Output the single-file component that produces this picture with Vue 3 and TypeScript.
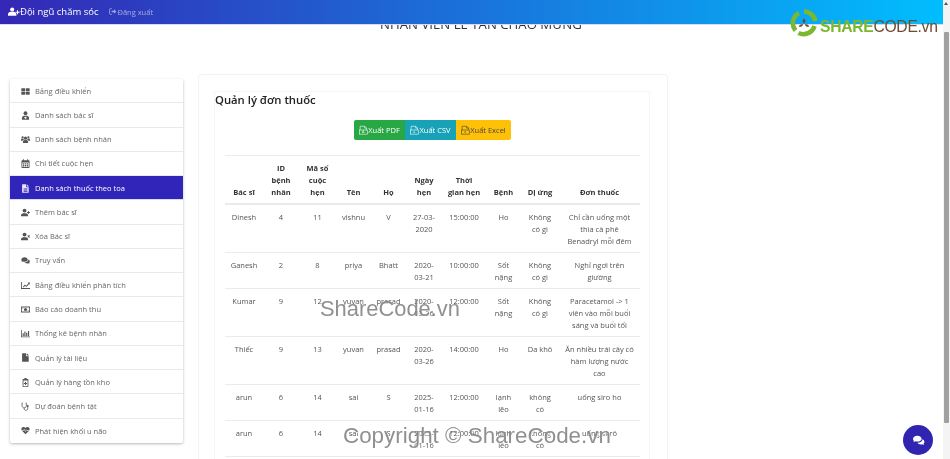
<script setup lang="ts">
interface MenuItem { label: string; icon: string; active?: boolean }
const menu: MenuItem[] = [
  { label: 'Bảng điều khiển', icon: 'grid' },
  { label: 'Danh sách bác sĩ', icon: 'doctor' },
  { label: 'Danh sách bệnh nhân', icon: 'users' },
  { label: 'Chi tiết cuộc hẹn', icon: 'calendar' },
  { label: 'Danh sách thuốc theo toa', icon: 'fileText', active: true },
  { label: 'Thêm bác sĩ', icon: 'userPlus' },
  { label: 'Xóa Bác sĩ', icon: 'userX' },
  { label: 'Truy vấn', icon: 'comments' },
  { label: 'Bảng điều khiển phân tích', icon: 'lineChart' },
  { label: 'Báo cáo doanh thu', icon: 'money' },
  { label: 'Thống kê bệnh nhân', icon: 'barChart' },
  { label: 'Quản lý tài liệu', icon: 'file' },
  { label: 'Quản lý hàng tồn kho', icon: 'clipboard' },
  { label: 'Dự đoán bệnh tật', icon: 'stethoscope' },
  { label: 'Phát hiện khối u não', icon: 'heartbeat' },
]
const headers = ['Bác sĩ', 'ID bệnh nhân', 'Mã số cuộc hẹn', 'Tên', 'Họ', 'Ngày hẹn', 'Thời gian hẹn', 'Bệnh', 'Dị ứng', 'Đơn thuốc']
const widths = [38, 36, 37, 35, 35, 36, 44, 35, 38, 81]
const rows: string[][] = [
  ['Dinesh', '4', '11', 'vishnu', 'V', '27-03-2020', '15:00:00', 'Ho', 'Không có gì', 'Chỉ cần uống một thìa cà phê Benadryl mỗi đêm'],
  ['Ganesh', '2', '8', 'priya', 'Bhatt', '2020-03-21', '10:00:00', 'Sốt nặng', 'Không có gì', 'Nghỉ ngơi trên giường'],
  ['Kumar', '9', '12', 'yuvan', 'prasad', '2020-03-26', '12:00:00', 'Sốt nặng', 'Không có gì', 'Paracetamol -> 1 viên vào mỗi buổi sáng và buổi tối'],
  ['Thiếc', '9', '13', 'yuvan', 'prasad', '2020-03-26', '14:00:00', 'Ho', 'Da khô', 'Ăn nhiều trái cây có hàm lượng nước cao'],
  ['arun', '6', '14', 'sai', 'S', '2025-01-16', '12:00:00', 'lạnh lẽo', 'không có', 'uống siro ho'],
  ['arun', '6', '14', 'sai', 'S', '2025-01-16', '12:00:00', 'lạnh lẽo', 'không có', 'uống si-rô'],
]
const exportsList = [
  { label: 'Xuất PDF', cls: 'green', mark: 'A' },
  { label: 'Xuất CSV', cls: 'teal', mark: 'a' },
  { label: 'Xuất Excel', cls: 'yellow', mark: 'x' },
]
</script>

<template>
  <div class="page">
    <header class="topbar">
      <span class="brand">
        <svg class="brand-icon" viewBox="0 0 20 14" fill="currentColor"><circle cx="7" cy="3.6" r="3.4"/><path d="M0 14v-2c0-2.800 2.200-4.500 4.500-4.500h5c2.300 0 4.500 1.700 4.500 4.500v2z"/><path d="M15 5h1.800v2.400H19.500v1.700H16.800v2.400H15V9.100H12.500V7.400H15z"/></svg>Đội ngũ chăm sóc
      </span>
      <a class="logout">
        <svg class="logout-icon" viewBox="0 0 14 12" fill="none" stroke="currentColor" stroke-width="1.400"><path d="M5 1H2.500C1.500 1 1 1.600 1 2.500v7C1 10.400 1.500 11 2.500 11H5"/><path d="M4.500 4.500h4V2l4.500 4-4.500 4V7.500h-4z" fill="currentColor" stroke="none"/></svg>Đăng xuất
      </a>
    </header>

    <h1 class="greeting">NHÂN VIÊN LỄ TÂN CHÀO MỪNG</h1>

    <main class="content">
      <nav class="menu">
        <a v-for="item in menu" :key="item.label" class="menu-item" :class="{ active: item.active }">
          <svg class="menu-icon" viewBox="0 0 14 14" fill="currentColor">
            <template v-if="item.icon === 'grid'"><rect x="0.500" y="2" width="6" height="4.500" rx=".6"/><rect x="7.500" y="2" width="6" height="4.500" rx=".6"/><rect x="0.500" y="7.500" width="6" height="4.500" rx=".6"/><rect x="7.500" y="7.500" width="6" height="4.500" rx=".6"/></template>
            <template v-else-if="item.icon === 'doctor'"><circle cx="7" cy="3.500" r="3"/><path d="M1.500 13.500v-2.500c0-2 1.500-3.500 3.500-3.500h4c2 0 3.500 1.500 3.500 3.500v2.500z"/><rect x="6" y="9" width="2" height="3" fill="#fff"/><rect x="5" y="10" width="4" height="1" fill="#fff"/></template>
            <template v-else-if="item.icon === 'users'"><circle cx="7" cy="5" r="2.500"/><circle cx="2.500" cy="3.500" r="1.700"/><circle cx="11.500" cy="3.500" r="1.700"/><path d="M3 12.500v-2c0-1.600 1.200-2.700 2.700-2.700h2.600c1.500 0 2.700 1.100 2.700 2.700v2z"/><path d="M0 9V7.500C0 6.200.9 5.600 2 5.600h1.500c.2.900.6 1.500 1.200 1.900C3.300 7.800 2.500 8.400 2.200 9zM14 9V7.500c0-1.300-.9-1.900-2-1.900h-1.500c-.2.900-.6 1.500-1.200 1.900 1.400.3 2.200.9 2.500 1.500z"/></template>
            <template v-else-if="item.icon === 'calendar'"><path fill-rule="evenodd" d="M3 .5h1.500V2h5V.5H11V2h1c.8 0 1.300.6 1.300 1.300v9.400c0 .7-.5 1.300-1.300 1.300H2c-.8 0-1.300-.6-1.300-1.300V3.300C.7 2.600 1.200 2 2 2h1zM2 5.500v7h10v-7z"/><path d="M3 6.500h2v2H3zM6 6.500h2v2H6zM9 6.500h2v2H9zM3 9.500h2v2H3zM6 9.500h2v2H6zM9 9.500h2v2H9z"/></template>
            <template v-else-if="item.icon === 'fileText'"><path fill-rule="evenodd" d="M2.500 0.500h5.500v3.700c0 .4.300.8.800.8h3.200v7.700c0 .5-.4.800-.8.800h-8.700c-.5 0-.8-.3-.8-.8V1.300c0-.5.300-.8.800-.8zM4 7v1h6V7zM4 9v1h6V9zM4 11v1h6v-1z"/><path d="M9 .5v3.500h3.500z"/></template>
            <template v-else-if="item.icon === 'userPlus'"><circle cx="5.500" cy="4" r="3"/><path d="M0 13v-1.500C0 9.500 1.500 8 3.500 8h4c2 0 3.500 1.500 3.500 3.500V13z"/><path d="M11 4.500h1.300v1.800H14v1.300h-1.700v1.800H11V7.600H9.300V6.300H11z"/></template>
            <template v-else-if="item.icon === 'userX'"><circle cx="5.500" cy="4" r="3"/><path d="M0 13v-1.500C0 9.500 1.500 8 3.500 8h4c2 0 3.500 1.500 3.500 3.500V13z"/><path d="M10 5.500l1 -.8 1 1.200 1-1.200 1 .8-1.200 1.200 1.200 1.300-1 .8-1-1.200-1 1.200-1-.8 1.200-1.300z"/></template>
            <template v-else-if="item.icon === 'comments'"><path d="M5.500 2C2.600 2 .5 3.600.5 5.700c0 .9.400 1.700 1 2.300-.3.700-.8 1.200-.8 1.200 1 0 1.900-.4 2.400-.8.800.3 1.600.4 2.400.4 2.900 0 5-1.500 5-3.100C10.500 3.600 8.400 2 5.500 2z"/><path d="M11.500 5.600c0 2.400-2.400 4.100-5.300 4.100h-.7c.8 1.100 2.300 1.800 4 1.800.6 0 1.200-.1 1.800-.3.500.4 1.200.8 2.200.8 0 0-.5-.5-.8-1.200.6-.6 1-1.400 1-2.200 0-1.300-.9-2.400-2.200-3z"/></template>
            <template v-else-if="item.icon === 'lineChart'"><path d="M0 1.500h1.300V11H14v1.500H0z"/><path d="M3 9l3-3.500 2.200 1.800L11.500 3.500l-1-1h3.200v3.200l-1-1-4.300 4.600L6.200 7.500 4 10z"/></template>
            <template v-else-if="item.icon === 'money'"><path fill-rule="evenodd" d="M0 2.500h14v9H0zM1.300 3.800v6.400h11.400V3.800z"/><circle cx="7" cy="7" r="2.500"/><path d="M2 4.500h1.500v1H2zM10.500 8.500H12v1h-1.500z"/></template>
            <template v-else-if="item.icon === 'barChart'"><path d="M0 1.500h1.200V11.500H14v1.200H0z"/><path d="M2.500 6.500h1.800v4.500H2.500zM5.200 4h1.800v7H5.200zM8 6h1.800v5H8zM10.800 3h1.800v8h-1.800z"/></template>
            <template v-else-if="item.icon === 'file'"><path d="M2.500.5h5.500v3.700c0 .4.300.8.800.8h3.200v7.700c0 .5-.4.800-.8.800h-8.700c-.5 0-.8-.3-.8-.8V1.300c0-.5.300-.8.800-.8z"/><path d="M9 .5v3.500h3.500z"/></template>
            <template v-else-if="item.icon === 'clipboard'"><path fill-rule="evenodd" d="M5 1.500C5 .7 5.800 0 7 0s2 .7 2 1.500h1.500c.7 0 1 .6 1 1.200v10c0 .7-.4 1.300-1.200 1.300H3.700c-.8 0-1.200-.6-1.200-1.300v-10c0-.6.300-1.200 1-1.200zM3.800 4v8.700h6.400V4z"/><path d="M6.200 6h1.600v1.700h1.700v1.600H7.800V11H6.200V9.300H4.500V7.700h1.700z"/></template>
            <template v-else-if="item.icon === 'stethoscope'"><path d="M2.500 1.500H1.700v4.300C1.700 7.800 3.200 9.200 5 9.200s3.300-1.400 3.300-3.400V1.500H7.500" fill="none" stroke="currentColor" stroke-width="1.300"/><path d="M5 9v1.500c0 1.500 1.200 2.500 2.700 2.500s2.800-1 2.800-2.500V7.500" fill="none" stroke="currentColor" stroke-width="1.300"/><circle cx="10.500" cy="6.300" r="1.500"/></template>
            <template v-else><path d="M7 13L1.500 7.500C-.3 5.500.5 2 3.700 1.700 5.200 1.600 6.300 2.300 7 3.300c.7-1 1.800-1.700 3.300-1.600 3.200.3 4 3.800 2.200 5.800z"/><path d="M1 7h3l1-2 2 3.500 1.500-2.500.7 1H13" fill="none" stroke="#fff" stroke-width=".9"/></template>
          </svg>
          <span>{{ item.label }}</span>
        </a>
      </nav>

      <section class="outer-card">
        <div class="inner-card">
          <h2 class="card-title">Quản lý đơn thuốc</h2>
          <div class="exports">
            <button v-for="b in exportsList" :key="b.label" class="btn" :class="b.cls">
              <svg class="btn-icon" viewBox="0 0 12 12" fill="none" stroke="currentColor" stroke-width=".8"><path d="M1.500 6V1h6L10 3.500V6"/><path d="M7.500 1v2.500H10"/><rect x=".5" y="6" width="10.500" height="5.500"/><text x="5.700" y="10.600" text-anchor="middle" font-size="5" fill="currentColor" stroke="none">{{ b.mark }}</text></svg>{{ b.label }}
            </button>
          </div>
          <table class="table">
            <colgroup><col v-for="(w, i) in widths" :key="i" :style="{ width: w + 'px' }"></colgroup>
            <thead>
              <tr><th v-for="h in headers" :key="h">{{ h }}</th></tr>
            </thead>
            <tbody>
              <tr v-for="(row, r) in rows" :key="r">
                <td v-for="(cell, c) in row" :key="c">{{ cell }}</td>
              </tr>
            </tbody>
          </table>
        </div>
      </section>
    </main>

    <div class="logo">
      <svg class="logo-mark" viewBox="0 0 28 28">
        <path d="M14 2.500A11.500 11.500 0 0 1 25.300 12" fill="none" stroke="#7cb82f" stroke-width="4.600"/>
        <path d="M24.500 17A11.500 11.500 0 0 1 8.500 24" fill="none" stroke="#7cb82f" stroke-width="4.600"/>
        <path d="M5.500 21.500A11.500 11.500 0 0 1 9 4" fill="none" stroke="#7cb82f" stroke-width="4.600"/>
        <path d="M14 9.500c2 1.500 2 3.500 0 5-2-1.500-2-3.500 0-5zM14.800 15.500c2-.8 3.800 0 4.600 2.200-2.300.5-4-.3-4.600-2.200zM13.200 15.500c-.6 1.900-2.300 2.700-4.600 2.200.8-2.200 2.600-3 4.600-2.200z" fill="#6d4c30"/>
      </svg>
      <span class="logo-text"><b>SHARE</b><span>CODE</span><i>.vn</i></span>
    </div>

    <div class="mark mark-one">ShareCode.vn</div>
    <div class="mark mark-two">Copyright © ShareCode.vn</div>

    <div class="scrollbar"><span class="arrow"></span><span class="thumb"></span></div>

    <button class="chat" aria-label="Chat">
      <svg viewBox="0 0 16 14" fill="#fff"><path d="M6.500 1C3.300 1 1 2.800 1 5c0 1 .5 1.900 1.200 2.500-.3.800-.9 1.400-.9 1.400 1.100 0 2.100-.4 2.700-.9.800.3 1.600.4 2.500.4 3.200 0 5.500-1.700 5.500-3.400C12 2.800 9.700 1 6.500 1z"/><path d="M13 5.500c0 2.600-2.600 4.500-5.800 4.500h-.6c.9 1.200 2.500 2 4.400 2 .7 0 1.300-.1 1.900-.3.600.4 1.400.8 2.400.8 0 0-.6-.5-.9-1.300.7-.6 1.100-1.500 1.100-2.400 0-1.400-1-2.600-2.500-3.300z"/></svg>
    </button>
  </div>
</template>

<style>
html, body { margin: 0; overflow: hidden; background: #fff; }
</style>

<style scoped>
.page {
  position: relative;
  width: 950px;
  height: 459px;
  overflow: hidden;
  background: #fff;
  font-family: "Open Sans", "Noto Sans", sans-serif;
  font-size: 8px;
  line-height: 12px;
  color: #555;
  filter: blur(.35px);
}
.topbar {
  position: absolute;
  inset: 0 0 auto 0;
  height: 24.500px;
  z-index: 3;
  display: flex;
  align-items: center;
  padding-left: 8px;
  box-sizing: border-box;
  background: linear-gradient(90deg, #3427b5 0%, #00bfff 100%);
  border-bottom: 1px solid #d8dcf2;
}
.brand {
  display: flex;
  align-items: center;
  color: #fff;
  font-size: 9.500px;
  font-weight: 500;
}
.brand-icon { width: 12px; height: 9px; }
.logout {
  display: flex;
  align-items: center;
  margin-left: 11px;
  color: rgba(255, 255, 255, .55);
  font-size: 7.500px;
}
.logout-icon { width: 8px; height: 7px; }
.greeting {
  margin: 0;
  padding-top: 17px;
  height: 67px;
  box-sizing: border-box;
  text-align: center;
  font-size: 13.200px;
  line-height: 15px;
  font-weight: 400;
  color: #333;
  width: 962px;
}
.content {
  display: flex;
  align-items: flex-start;
  padding-left: 10px;
  padding-top: 12px;
}
.menu {
  width: 173px;
  flex: none;
  display: flex;
  flex-direction: column;
  background: #fff;
  border-radius: 2px;
  box-shadow: 0 1px 3px rgba(0, 0, 0, .28);
}
.menu-item {
  display: flex;
  align-items: center;
  height: 24.270px;
  box-sizing: border-box;
  padding-left: 25px;
  padding-right: 4px;
  border-bottom: 1px solid #e9e9e9;
  color: #666;
  font-size: 7.500px;
  position: relative;
}
.menu-item:last-child { border-bottom: 0; }
.menu-item.active { background: #3024b9; color: #fff; border-bottom-color: #cfe1f5; }
.menu-icon {
  position: absolute;
  left: 10.500px;
  top: 7.500px;
  width: 9px;
  height: 9px;
  color: #555;
}
.active .menu-icon { color: #e8e4fb; }
.outer-card {
  margin-left: 15px;
  margin-top: -5px;
  width: 470px;
  height: 400px;
  flex: none;
  box-sizing: border-box;
  padding: 16px 17px 0 15px;
  border: 1px solid #f3f3f3;
  border-radius: 3px;
}
.inner-card {
  height: 400px;
  border: 1px solid #f6f6f6;
  box-sizing: border-box;
  padding: 0 9px 0 0;
}
.card-title {
  margin: 0;
  font-size: 11.300px;
  line-height: 15px;
  font-weight: 600;
  color: #222;
}
.exports {
  display: flex;
  justify-content: center;
  margin-top: 13px;
  margin-left: 10px;
}
.btn {
  display: flex;
  align-items: center;
  justify-content: center;
  height: 20px;
  padding: 0;
  border: 0;
  font: inherit;
  font-size: 7.500px;
  color: #fff;
}
.btn.green { width: 51px; background: #28a745; border-radius: 2px 0 0 2px; }
.btn.teal { width: 51px; background: #17a2b8; }
.btn.yellow { width: 55px; background: #ffc107; color: #444; border-radius: 0 2px 2px 0; }
.btn-icon { width: 9px; height: 10px; }
.table {
  width: 415px;
  margin: 15px 0 0 10px;
  table-layout: fixed;
  border-collapse: collapse;
  text-align: center;
}
.table th {
  padding: 6px 5px 5px;
  vertical-align: bottom;
  color: #333;
  font-weight: 700;
  font-size: 7.500px;
  border-top: 1px solid #e9ecef;
  border-bottom: 2px solid #e9ecef;
}
.table td {
  padding: 5.500px 5px 5.500px;
  vertical-align: top;
  color: #555;
  font-size: 7.500px;
  border-bottom: 1px solid #e9ecef;
}
.logo {
  position: absolute;
  left: 790px;
  top: 9px;
  z-index: 4;
  display: flex;
  align-items: center;
}
.logo-mark { width: 28px; height: 28px; }
.logo-text {
  margin-left: 2px;
  margin-top: 8px;
  font-family: "Liberation Sans", sans-serif;
  font-size: 15.700px;
  line-height: 20px;
  letter-spacing: -.3px;
  color: #6d4c30;
}
.logo-text b { color: #7cb82f; }
.logo-text i { font-style: normal; }
.mark {
  position: absolute;
  z-index: 2;
  font-family: "Liberation Sans", sans-serif;
  line-height: 24px;
  color: rgba(125, 125, 125, .85);
  text-shadow: 1px 1px 1px rgba(255, 255, 255, .7);
  white-space: nowrap;
  pointer-events: none;
}
.mark-one { left: 320px; top: 297px; font-size: 21.900px; }
.mark-two { left: 343px; top: 424px; font-size: 22.400px; }
.scrollbar {
  position: absolute;
  top: 0;
  right: 0;
  bottom: 0;
  width: 7px;
  z-index: 5;
  background: #f4f4f4;
}
.arrow {
  position: absolute;
  top: 2px;
  left: 1px;
  border: 2.500px solid transparent;
  border-top: 0;
  border-bottom: 3px solid #555;
}
.thumb {
  position: absolute;
  top: 32px;
  left: 1px;
  width: 5px;
  height: 391px;
  background: #a0a0a0;
  border-radius: 1px;
}
.chat {
  position: absolute;
  left: 903px;
  top: 425px;
  width: 30px;
  height: 30px;
  padding: 0;
  border: 0;
  border-radius: 50%;
  background: #3024b0;
  display: flex;
  align-items: center;
  justify-content: center;
  z-index: 6;
}
.chat svg { width: 13px; height: 11px; }
</style>
